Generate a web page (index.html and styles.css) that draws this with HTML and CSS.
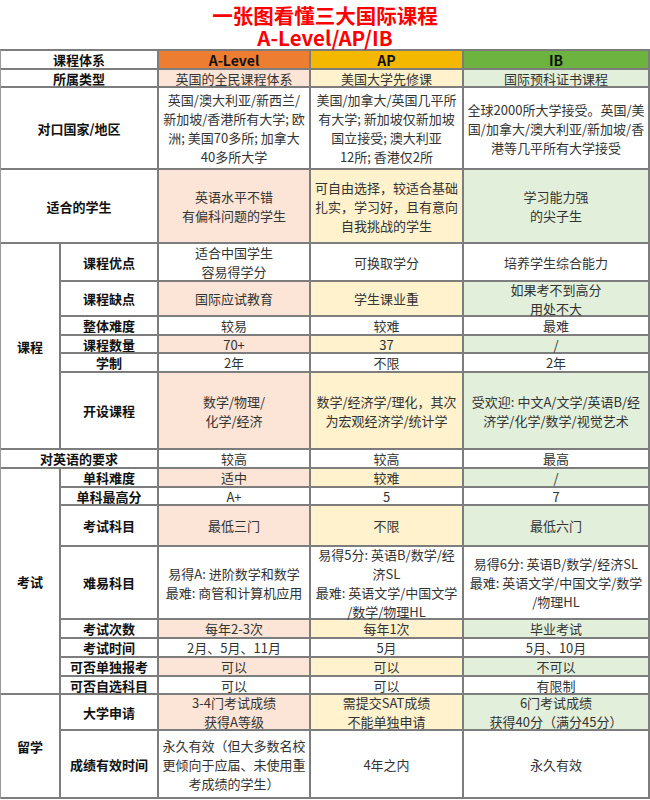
FILE: index.html
```html
<!DOCTYPE html>
<html lang="zh-CN">
<head>
<meta charset="utf-8">
<title>一张图看懂三大国际课程</title>
<link rel="stylesheet" href="styles.css">
</head>
<body>
<div class="page">
  <header class="title">
    <div class="t1">一张图看懂三大国际课程</div>
    <div class="t2">A-Level/AP/IB</div>
  </header>
  <div class="grid">
    <div class="c lab s2 one">课程体系</div>
    <div class="c head ha">A-Level</div>
    <div class="c head hp">AP</div>
    <div class="c head hi">IB</div>

    <div class="c lab s2">所属类型</div>
    <div class="c fa">英国的全民课程体系</div>
    <div class="c fp">美国大学先修课</div>
    <div class="c fi">国际预科证书课程</div>

    <div class="c lab s2">对口国家/地区</div>
    <div class="c">英国/澳大利亚/新西兰/<br>新加坡/香港所有大学; 欧<br>洲; 美国70多所; 加拿大<br>40多所大学</div>
    <div class="c">美国/加拿大/英国几平所<br>有大学; 新加坡仅新加坡<br>国立接受; 澳大利亚<br>12所; 香港仅2所</div>
    <div class="c">全球2000所大学接受。英国/美<br>国/加拿大/澳大利亚/新加坡/香<br>港等几平所有大学接受</div>

    <div class="c lab s2">适合的学生</div>
    <div class="c fa">英语水平不错<br>有偏科问题的学生</div>
    <div class="c fp">可自由选择，较适合基础<br>扎实，学习好，且有意向<br>自我挑战的学生</div>
    <div class="c fi">学习能力强<br>的尖子生</div>

    <div class="c lab cat r6">课程</div>
    <div class="c lab">课程优点</div>
    <div class="c">适合中国学生<br>容易得学分</div>
    <div class="c">可换取学分</div>
    <div class="c">培养学生综合能力</div>

    <div class="c lab">课程缺点</div>
    <div class="c fa">国际应试教育</div>
    <div class="c fp">学生课业重</div>
    <div class="c fi">如果考不到高分<br>用处不大</div>

    <div class="c lab">整体难度</div>
    <div class="c">较易</div>
    <div class="c">较难</div>
    <div class="c">最难</div>

    <div class="c lab">课程数量</div>
    <div class="c fa">70+</div>
    <div class="c fp">37</div>
    <div class="c fi">/</div>

    <div class="c lab">学制</div>
    <div class="c">2年</div>
    <div class="c">不限</div>
    <div class="c">2年</div>

    <div class="c lab">开设课程</div>
    <div class="c fa">数学/物理/<br>化学/经济</div>
    <div class="c fp">数学/经济学/理化，其次<br>为宏观经济学/统计学</div>
    <div class="c fi">受欢迎: 中文A/文学/英语B/经<br>济学/化学/数学/视觉艺术</div>

    <div class="c lab s2">对英语的要求</div>
    <div class="c">较高</div>
    <div class="c">较高</div>
    <div class="c">最高</div>

    <div class="c lab cat r8">考试</div>
    <div class="c lab">单科难度</div>
    <div class="c fa">适中</div>
    <div class="c fp">较难</div>
    <div class="c fi">/</div>

    <div class="c lab">单科最高分</div>
    <div class="c">A+</div>
    <div class="c">5</div>
    <div class="c">7</div>

    <div class="c lab">考试科目</div>
    <div class="c fa">最低三门</div>
    <div class="c fp">不限</div>
    <div class="c fi">最低六门</div>

    <div class="c lab">难易科目</div>
    <div class="c">易得A: 进阶数学和数学<br>最难: 商管和计算机应用</div>
    <div class="c">易得5分: 英语B/数学/经<br>济SL<br>最难: 英语文学/中国文学<br>/数学/物理HL</div>
    <div class="c">易得6分: 英语B/数学/经济SL<br>最难: 英语文学/中国文学/数学<br>/物理HL</div>

    <div class="c lab">考试次数</div>
    <div class="c fa">每年2-3次</div>
    <div class="c fp">每年1次</div>
    <div class="c fi">毕业考试</div>

    <div class="c lab">考试时间</div>
    <div class="c">2月、5月、11月</div>
    <div class="c">5月</div>
    <div class="c">5月、10月</div>

    <div class="c lab">可否单独报考</div>
    <div class="c fa">可以</div>
    <div class="c fp">可以</div>
    <div class="c fi">不可以</div>

    <div class="c lab">可否自选科目</div>
    <div class="c">可以</div>
    <div class="c">可以</div>
    <div class="c">有限制</div>

    <div class="c lab cat r2">留学</div>
    <div class="c lab">大学申请</div>
    <div class="c fa">3-4门考试成绩<br>获得A等级</div>
    <div class="c fp">需提交SAT成绩<br>不能单独申请</div>
    <div class="c fi">6门考试成绩<br>获得40分（满分45分）</div>

    <div class="c lab">成绩有效时间</div>
    <div class="c">永久有效（但大多数名校<br>更倾向于应届、未使用重<br>考成绩的学生）</div>
    <div class="c">4年之内</div>
    <div class="c">永久有效</div>
  </div>
</div>
</body>
</html>
```

FILE: styles.css
```css
html, body {
  margin: 0;
  padding: 0;
  background: #ffffff;
}

.page {
  width: 650px;
  font-family: "Noto Sans CJK SC", "Noto Sans", sans-serif;
  color: #333333;
}

.title {
  height: 49px;
  box-sizing: border-box;
  padding-top: 4px;
  text-align: center;
  color: #ff0000;
  font-weight: 700;
  font-size: 20.5px;
  line-height: 22px;
}

.grid {
  display: grid;
  grid-template-columns: 60px 98px 152px 153px 186px;
  grid-template-rows: 19px 18px 82px 74px 38px 35px 19px 18px 19px 77px 19px 19px 18px 41px 73px 19px 19px 19px 18px 36px 68px;
  border-top: 2px solid #7d7d7d;
  border-left: 1px solid #9a9a9a;
  width: 650px;
  box-sizing: border-box;
}

.c {
  box-sizing: border-box;
  border-right: 2px solid #7d7d7d;
  border-bottom: 2px solid #7d7d7d;
  display: flex;
  align-items: center;
  justify-content: center;
  text-align: center;
  white-space: nowrap;
  font-size: 13px;
  line-height: 19px;
  background: #ffffff;
}

.lab {
  font-weight: 700;
  color: #111111;
}

.one {
  line-height: 16px;
}

.s2 {
  grid-column: span 2;
}

.r6 { grid-row: span 6; }
.r8 { grid-row: span 8; }
.r2 { grid-row: span 2; }

.head {
  font-weight: 700;
  font-size: 14px;
  line-height: 16px;
  color: #111111;
}

.ha { background: #ed7d31; }
.hp { background: #f4b800; }
.hi { background: #6db33f; }

.fa { background: #fce4d6; }
.fp { background: #fff2cc; }
.fi { background: #e2efda; }
```
